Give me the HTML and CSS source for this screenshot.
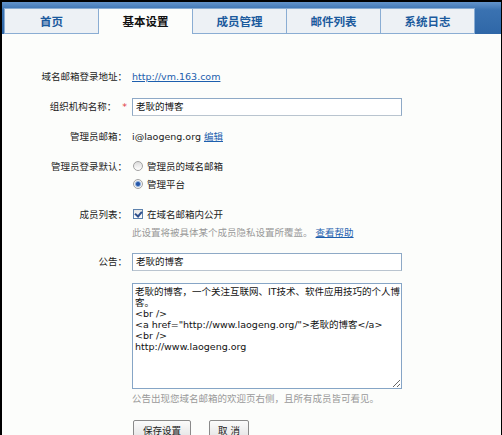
FILE: index.html
```html
<!DOCTYPE html>
<html lang="zh-CN">
<head>
    <meta charset="UTF-8">
    <title>基本设置 - 域名邮箱管理</title>
    <link rel="stylesheet" href="styles.css">
</head>
<body>

<div class="frame">
    <ul class="tabs">
        <li>首页</li>
        <li class="active">基本设置</li>
        <li>成员管理</li>
        <li>邮件列表</li>
        <li>系统日志</li>
    </ul>

    <div class="panel">
        <div class="row">
            <label class="lbl">域名邮箱登录地址：</label>
            <div class="field"><a href="#">http://vm.163.com</a></div>
        </div>

        <div class="row">
            <label class="lbl">组织机构名称：<em class="req">*</em></label>
            <div class="field"><input type="text" class="text" value="老耿的博客"></div>
        </div>

        <div class="row">
            <label class="lbl">管理员邮箱：</label>
            <div class="field">i@laogeng.org <a href="#">编辑</a></div>
        </div>

        <div class="row">
            <label class="lbl">管理员登录默认：</label>
            <div class="field">
                <div class="opt"><input type="radio" name="login">管理员的域名邮箱</div>
                <div class="opt"><input type="radio" name="login" checked>管理平台</div>
            </div>
        </div>

        <div class="row">
            <label class="lbl">成员列表：</label>
            <div class="field">
                <div class="opt"><input type="checkbox" checked>在域名邮箱内公开</div>
                <div class="tip">此设置将被具体某个成员隐私设置所覆盖。 <a href="#">查看帮助</a></div>
            </div>
        </div>

        <div class="row">
            <label class="lbl">公告：</label>
            <div class="field"><input type="text" class="text" value="老耿的博客"></div>
        </div>

        <div class="row">
            <label class="lbl"></label>
            <div class="field">
                <textarea class="notice">老耿的博客，一个关注互联网、IT技术、软件应用技巧的个人博客。
&lt;br /&gt;
&lt;a href="http://www.laogeng.org/"&gt;老耿的博客&lt;/a&gt;
&lt;br /&gt;
http://www.laogeng.org</textarea>
                <div class="tip">公告出现您域名邮箱的欢迎页右侧，且所有成员皆可看见。</div>
            </div>
        </div>

        <div class="row">
            <label class="lbl"></label>
            <div class="field">
                <button class="btn">保存设置</button>
                <button class="btn cancel">取 消</button>
            </div>
        </div>
    </div>
</div>

</body>
</html>
```

FILE: styles.css
```css
body {
    margin: 0;
    font-family: "DejaVu Sans", "Noto Sans CJK SC", sans-serif;
    font-size: 9.5px;
    color: #222;
    background: #fcfdfb;
}

.frame {
    height: 100vh;
    box-sizing: border-box;
    border: solid #000;
    border-width: 2px 1px 0 2px;
    background: #fcfdfb;
}

.tabs {
    display: flex;
    align-items: flex-end;
    height: 32px;
    box-sizing: border-box;
    margin: 0;
    padding: 0 0 0 2px;
    list-style: none;
    background: linear-gradient(#6394cb, #3a72b1 25%, #2f67a7);
}

.tabs li {
    width: 95px;
    height: 26px;
    box-sizing: border-box;
    margin-right: -1px;
    border: 1px solid #8aadd3;
    background: #edf1f5;
    color: #1b5a9d;
    font-family: "Noto Sans CJK SC", sans-serif;
    font-size: 11.5px;
    font-weight: bold;
    line-height: 24px;
    text-align: center;
}

.tabs li.active {
    position: relative;
    border-bottom: none;
    background: #fcfdfb;
    color: #111;
}

.panel {
    padding-top: 34px;
}

.row {
    display: flex;
    margin-bottom: 12px;
    line-height: 18px;
}

.lbl {
    flex: none;
    width: 125px;
    text-align: right;
}

.req {
    margin-left: 6px;
    color: #e0393e;
    font-style: normal;
}

.field {
    margin-left: 5px;
}

a {
    color: #1d5fae;
}

.text {
    width: 270px;
    height: 18px;
    box-sizing: border-box;
    margin: 0;
    padding: 0 3px;
    border: 1px solid #8ea9c6;
    border-bottom-color: #b9c4cf;
    background: #fff;
    font: inherit;
    color: #111;
}

.opt input {
    appearance: none;
    width: 10px;
    height: 10px;
    margin: 0 4px 0 1px;
    vertical-align: -1px;
}

.opt input[type=radio] {
    border: 1px solid #a2a2a2;
    border-radius: 50%;
    background: linear-gradient(#dcdcdc, #fff);
}

.opt input[type=radio]:checked {
    background: radial-gradient(circle, #2456a8 0 1.5px, #8fb0de 2.5px, #f2f2f2 3.5px);
}

.opt input[type=checkbox] {
    position: relative;
    border: 1px solid #5d82ad;
    background: linear-gradient(#e6e6e6, #fff);
}

.opt input[type=checkbox]:checked::after {
    content: "";
    position: absolute;
    left: 2px;
    top: 0;
    width: 3px;
    height: 5px;
    border: solid #2d4f8c;
    border-width: 0 2px 2px 0;
    transform: rotate(40deg);
}

.tip {
    color: #999;
    line-height: 17px;
}

.notice {
    display: block;
    width: 270px;
    height: 106px;
    box-sizing: border-box;
    margin: 0;
    padding: 2px 0 0 2px;
    border: 1px solid #86a5c6;
    background: #fff;
    font: inherit;
    line-height: 11px;
    color: #111;
}

.notice + .tip {
    line-height: 18px;
    margin-top: 1px;
}

.btn {
    height: 21px;
    margin: 0 0 0 1px;
    padding: 0 9px;
    border: 1px solid #8a8a8a;
    border-radius: 2px;
    background: linear-gradient(#fbfbfb, #e2e2e2);
    font: inherit;
    color: #222;
}

.btn.cancel {
    margin-left: 15px;
    padding: 0 8px;
}
```
